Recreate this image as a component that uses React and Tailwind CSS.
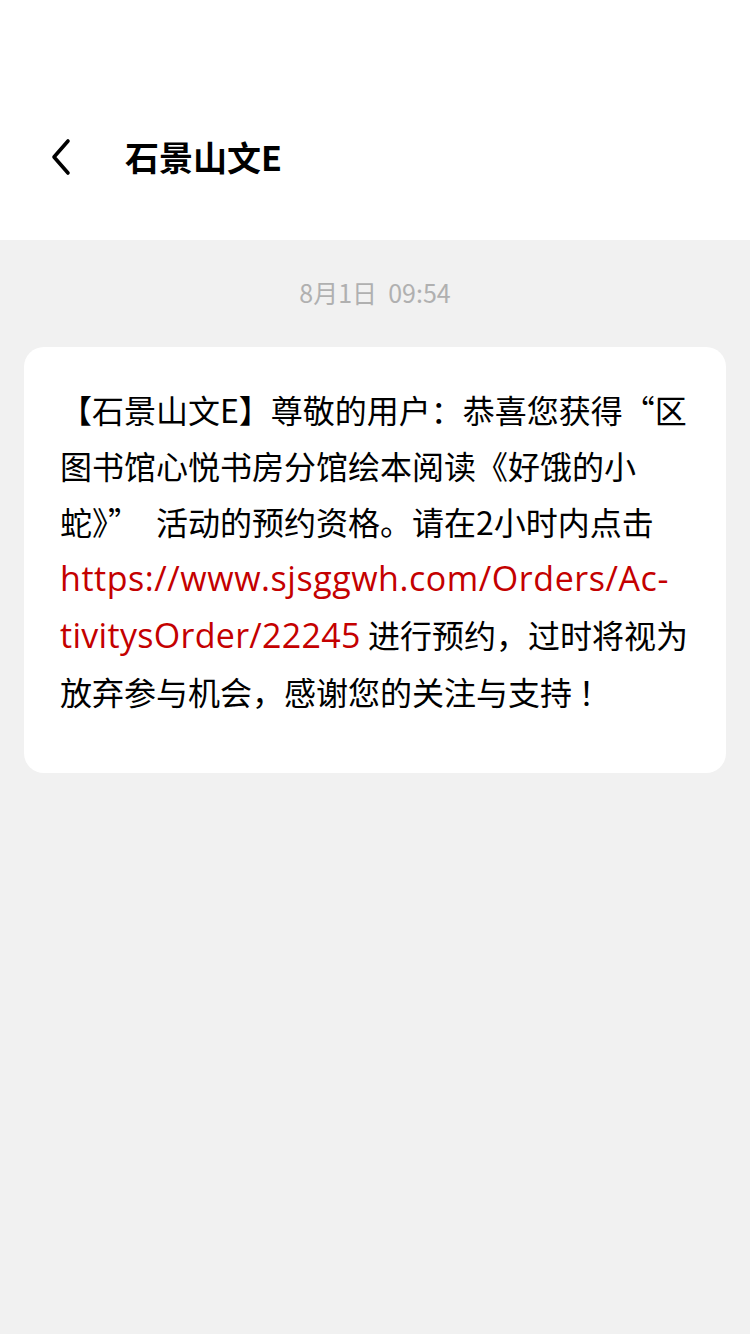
export default function App() {
  return (
    <div
      className="min-h-[1334px] bg-[#f1f1f1] text-black"
      style={{ fontFamily: '"Noto Sans CJK SC", "Noto Sans", sans-serif' }}
    >
      <div className="h-[240px] bg-white flex items-center pt-[74px]">
        <button className="ml-[44px] w-[32px] h-[40px] flex items-center justify-center">
          <svg width="24" height="38" viewBox="0 0 24 38" fill="none">
            <polyline
              points="20,3 6,19 20,35"
              stroke="#000"
              strokeWidth="3.6"
              strokeLinecap="round"
              strokeLinejoin="round"
            />
          </svg>
        </button>
        <h1 className="ml-[49px] text-[34px] font-bold leading-none">石景山文E</h1>
      </div>

      <div className="pt-[40px] pb-[42px] text-center text-[25px] leading-none text-[#b0b0b0]">
        8月1日&nbsp;&nbsp;09:54
      </div>

      <div className="mx-[24px] bg-white rounded-[20px] pl-[36px] pr-[24px] pt-[34px] pb-[54px]">
        <p className="text-[32px] leading-[56px] whitespace-nowrap">
          【石景山文E】尊敬的用户：恭喜您获得“区
          <br />
          图书馆心悦书房分馆绘本阅读《好饿的小
          <br />
          蛇》”&ensp;活动的预约资格。请在2小时内点击
          <br />
          <span className="text-[#c40000] text-[34px] font-medium tracking-[0.55px] font-['Open_Sans',sans-serif]">
            https://www.sjsggwh.com/Orders/Ac-
          </span>
          <br />
          <span className="text-[#c40000] text-[34px] font-medium tracking-[0.3px] font-['Open_Sans',sans-serif]">
            tivitysOrder/22245
          </span>{' '}
          进行预约，过时将视为
          <br />
          放弃参与机会，感谢您的关注与支持&thinsp;！
        </p>
      </div>
    </div>
  );
}
